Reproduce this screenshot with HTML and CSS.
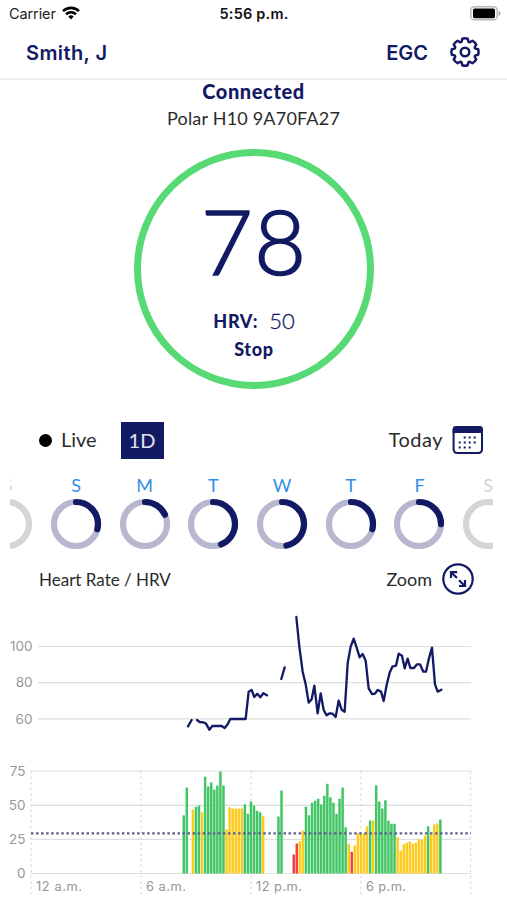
FILE: index.html
```html
<!DOCTYPE html>
<html lang="en">
<head>
<meta charset="utf-8">
<title>Heart Rate</title>
<link rel="stylesheet" href="styles.css">
</head>
<body>
<div class="statusbar">
  <div class="carrier"><span>Carrier</span>
    <svg width="18" height="14" viewBox="0 0 18 14" fill="none" stroke="#000" stroke-width="2.6"><path d="M1 5.1a11.6 11.6 0 0 1 16 0M4 8.3a7.3 7.3 0 0 1 10 0"/><path d="M9 13.4L6.3 10.6a4 4 0 0 1 5.4 0z" fill="#000" stroke="none"/></svg>
  </div>
  <div class="time">5:56 p.m.</div>
  <svg class="battery" width="31" height="15" viewBox="0 0 31 15"><rect x=".8" y=".8" width="26.4" height="13" rx="3.6" fill="#fff" stroke="#b8b8b8" stroke-width="1.5"/><rect x="3" y="2.6" width="22" height="9.6" rx="1.6"/><path d="M28.6 5v5q2-.8 2-2.5t-2-2.5z" fill="#aaa"/></svg>
</div>
<header class="nav">
  <div class="name">Smith, J</div>
  <div class="egc">EGC</div>
  <svg width="32" height="32" viewBox="-16 -16 32 32" fill="none" stroke="#131a64" stroke-width="2.5" stroke-linejoin="round"><path d="M-2.7-13.2Q0-14.1 2.7-13.2L3.4-10.4Q4-9.65 4.95-9.76L7.42-11.24Q9.9-9.9 11.24-7.42L9.76-4.95Q9.65-4 10.4-3.4L13.2-2.7Q14.1 0 13.2 2.7L10.4 3.4Q9.65 4 9.76 4.95L11.24 7.42Q9.9 9.9 7.42 11.24L4.95 9.76Q4 9.65 3.4 10.4L2.7 13.2Q0 14.1-2.7 13.2L-3.4 10.4Q-4 9.65-4.95 9.76L-7.42 11.24Q-9.9 9.9-11.24 7.42L-9.76 4.95Q-9.65 4-10.4 3.4L-13.2 2.7Q-14.1 0-13.2-2.7L-10.4-3.4Q-9.65-4-9.76-4.95L-11.24-7.42Q-9.9-9.9-7.42-11.24L-4.95-9.76Q-4-9.65-3.4-10.4Z"/><circle r="4.3"/></svg>
</header>
<main>
  <div class="connected">Connected</div>
  <div class="device">Polar H10 9A70FA27</div>
  <div class="dial">
    <div class="bpm">78</div>
    <div class="hrv"><b>HRV:</b><span>50</span></div>
    <div class="stop">Stop</div>
  </div>
  <div class="range">
    <i class="dot"></i><span class="live">Live</span><span class="oneday">1D</span>
    <span class="today">Today</span>
    <svg width="32" height="30" viewBox="0 0 32 30"><rect x="1.6" y="2" width="28.4" height="26" rx="3.4" fill="#fff" stroke="#131a64" stroke-width="2"/><path d="M.6 8V4.4Q.6 1 4 1h23.6q3.4 0 3.4 3.4V8z" fill="#131a64"/><path d="M11.7 12.5h2m3 0h2m3 0h2M6.7 17.5h2m3 0h2m3 0h2m3 0h2M6.7 22.5h2m3 0h2m3 0h2" stroke="#131a64" stroke-width="2.2"/></svg>
  </div>
  <div class="week">
    <div class="days" id="days"></div>
  </div>
  <div class="chart-head">
    <span class="title">Heart Rate / HRV</span><span class="zoom">Zoom</span>
    <svg width="32" height="32" viewBox="0 0 32 32" fill="none" stroke="#131a64" stroke-width="2.2"><circle cx="16" cy="16" r="14.7"/><path d="M9 15V9.2h6.2M9 9.2l6 5.8M23 17v6h-6M23 23l-6-5.8"/></svg>
  </div>
  <svg class="charts" width="507" height="300" viewBox="0 600 507 300">
    <g class="grid"><path d="M38 646.5H471M38 682.7H471M38 718.8H471M31 771H471M31 805.3H471M31 839.4H471M31 873.5H471"/></g>
    <g class="ylabel"><text x="32.5" y="651.2">100</text><text x="32.5" y="687.4">80</text><text x="32.5" y="723.5">60</text><text x="25.5" y="775.7">75</text><text x="25.5" y="810">50</text><text x="25.5" y="844.1">25</text><text x="25.5" y="878.2">0</text></g>
    <path class="ticks" d="M31 771V896M141 771V896M251 771V896M361 771V896M470.7 771V896"/>
    <g class="xlabel"><text x="36" y="891.3" textLength="46">12 a.m.</text><text x="146" y="891.3" textLength="40">6 a.m.</text><text x="256" y="891.3" textLength="46">12 p.m.</text><text x="366" y="891.3" textLength="40">6 p.m.</text></g>
    <g id="bars"></g>
    <path class="threshold" d="M31 833.3H471"/>
    <g class="line">
      <path transform="translate(170 605) scale(.3333)" d="M54 364L65 345M81 345L89 351 100 352 108 356 118 374 127 363 155 363 164 369 173 358 181 342 227 342 236 260 245 255 253 276 262 266 271 277 280 265 291 271M334 222L344 187"/>
      <path transform="translate(280 605) scale(.3333)" d="M49 36L58 125 68 200 77 238 86 293 95 283 103 242 113 325 122 265 131 315 140 331 149 325 158 326 167 336 176 287 185 314 194 320 203 175 212 125 221 101 230 128 239 157 248 147 257 167 266 250 276 267 285 266 293 255 303 260 311 288 320 240 329 203 337 185 348 182 356 146 366 152 374 190 383 161 391 189 402 189 411 178 420 178 430 200 438 200 447 160 456 128 465 238 473 260 484 254"/>
    </g>
  </svg>
</main>
<script src="script.js"></script>
</body>
</html>
```
FILE: styles.css
```css
* { box-sizing: border-box; }
body { margin: 0; width: 507px; height: 900px; overflow: hidden; background: #fff; color: #2b2b2b; font-family: Lato, sans-serif; }
svg { display: block; flex: none; }
.statusbar { height: 27px; display: grid; grid-template-columns: 1fr auto 1fr; align-items: center; padding: 0 6px 0 9px; font: 14.5px/27px Inter, sans-serif; color: #222; }
.carrier { display: flex; align-items: center; gap: 6px; }
.carrier span { letter-spacing: -.1px; }
.carrier svg { margin-bottom: 2px; }
.time { font-weight: 600; font-size: 14.5px; letter-spacing: .2px; color: #111; margin-right: 2px; }
.battery { justify-self: end; margin-bottom: 1px; }
.nav { height: 53px; display: flex; align-items: center; padding: 0 26px; border-bottom: 2px solid #ececec; color: #131a64; font: 600 20px/50px Inter, sans-serif; }
.nav svg { margin: 0 0 1px 21px; }
.name { flex: 1; letter-spacing: .4px; }
.connected { height: 24px; text-align: center; font-size: 20px; line-height: 23px; font-weight: 900; letter-spacing: .6px; color: #131a64; }
.device { height: 26px; text-align: center; font-size: 18px; line-height: 28px; letter-spacing: .2px; }
.dial { width: 240px; height: 240px; margin: 19px 0 0 134px; border: 7px solid #57d974; border-radius: 50%; color: #131a64; text-align: center; }
.bpm { height: 110px; margin-top: 29px; font-size: 90px; line-height: 110px; font-weight: 300; letter-spacing: 1px; -webkit-text-stroke: 1.6px #131a64; }
.hrv { height: 28px; margin-top: 12px; display: flex; justify-content: center; gap: 11px; font-size: 18px; line-height: 28px; }
.hrv b { font-weight: 900; letter-spacing: .7px; }
.hrv span { font-size: 22px; font-weight: 300; -webkit-text-stroke: .3px #131a64; }
.stop { font-size: 18px; line-height: 29px; font-weight: 900; letter-spacing: .7px; }
.range { height: 38px; margin-top: 32px; padding: 0 23px 0 39px; display: flex; align-items: center; font-size: 20px; }
.dot { width: 13px; height: 13px; border-radius: 50%; background: #000; margin-right: 9px; }
.live { width: 59.5px; margin-bottom: 2px; }
.oneday { width: 43px; height: 37px; line-height: 36px; background: #131a64; color: #e4e5f0; text-align: center; }
.today { margin-left: auto; margin-right: 9px; margin-bottom: 2px; letter-spacing: .5px; }
.week { height: 80px; margin: 14px 14px 0 10px; overflow: hidden; }
.days { display: flex; width: 550px; margin-left: -37px; }
.day { width: 68.7px; flex: none; display: flex; flex-direction: column; align-items: center; color: #2f8fea; font-size: 18px; line-height: 25px; }
.day.off { color: #d2d2d2; }
.day circle { fill: none; stroke-width: 6.2; }
.track { stroke: #b7b8d0; }
.off .track { stroke: #d5d5d5; }
.arc { stroke: #131a64; stroke-linecap: round; }
.chart-head { height: 36px; margin-top: 8px; padding: 0 33px 0 39px; display: flex; align-items: center; font-size: 17px; }
.title { flex: 1; }
.zoom { font-size: 18px; margin-right: 10px; }
.charts { margin-top: 3px; font-family: Inter, sans-serif; }
.grid path { stroke: #dedfe1; stroke-width: 1.2; }
.ylabel text { font-size: 13.5px; fill: #999; text-anchor: end; }
.xlabel text { font-size: 12.8px; fill: #949494; }
.ticks { stroke: #d3d3d6; stroke-dasharray: 2.5 3; }
.threshold { stroke: #5d608c; stroke-width: 2.2; stroke-dasharray: 2.5 2.55; }
.line path { fill: none; stroke: #131a64; stroke-width: 7; stroke-linecap: round; stroke-linejoin: round; }
.g { fill: #43c566; }
.y { fill: #fccb20; }
.r { fill: #f44242; }
```
FILE: script.js
```js
const ns = 'http://www.w3.org/2000/svg';

// Bars: [ten-minute slot, colour, heights in thirds of a pixel...]
const runs = [
  [50, 'g', 175, 258], [53, 'y', 192], [54, 'g', 200, 204], [56, 'y', 184],
  [57, 'g', 290, 261, 274, 252, 264, 306, 264], [64, 'y', 133, 199, 195, 195, 195, 195],
  [70, 'g', 208, 179, 216, 204, 188, 184], [76, 'y', 172], [81, 'g', 171, 249],
  [86, 'r', 57, 90], [88, 'y', 97, 129],
  [90, 'g', 200, 175, 212, 218, 224, 208, 233, 269, 229, 213, 179, 224, 258, 139],
  [104, 'y', 89], [105, 'r', 65], [106, 'y', 84, 121, 119, 119, 142], [111, 'g', 159], [112, 'y', 159],
  [113, 'g', 265, 216, 195, 220, 159, 149, 149],
  [120, 'y', 109, 69, 88, 92, 97, 89, 92, 103, 102, 114], [130, 'g', 142], [131, 'y', 117, 147, 150], [134, 'g', 162]
];
const bars = document.getElementById('bars');
for (const [slot, colour, ...heights] of runs) {
  heights.forEach((h, k) => {
    const r = document.createElementNS(ns, 'rect');
    r.setAttribute('class', colour);
    r.setAttribute('x', 31 + (slot + k) * 3.055 - 1.25);
    r.setAttribute('y', 873.5 - h / 3);
    r.setAttribute('width', 2.5);
    r.setAttribute('height', h / 3);
    r.setAttribute('rx', 0.5);
    bars.appendChild(r);
  });
}

const week = [['S', null], ['S', 0.29], ['M', 0.18], ['T', 0.44], ['W', 0.467], ['T', 0.289], ['F', 0.252], ['S', null]];
document.getElementById('days').innerHTML = week.map(([d, v]) => `
  <div class="day${v === null ? ' off' : ''}">${d}
    <svg width="52" height="52" viewBox="-26 -26 52 52">
      <circle class="track" r="22"/>
      ${v === null ? '' : `<circle class="arc" r="22" transform="rotate(-90)" pathLength="1" stroke-dasharray="${v} 2"/>`}
    </svg>
  </div>`).join('');
```
